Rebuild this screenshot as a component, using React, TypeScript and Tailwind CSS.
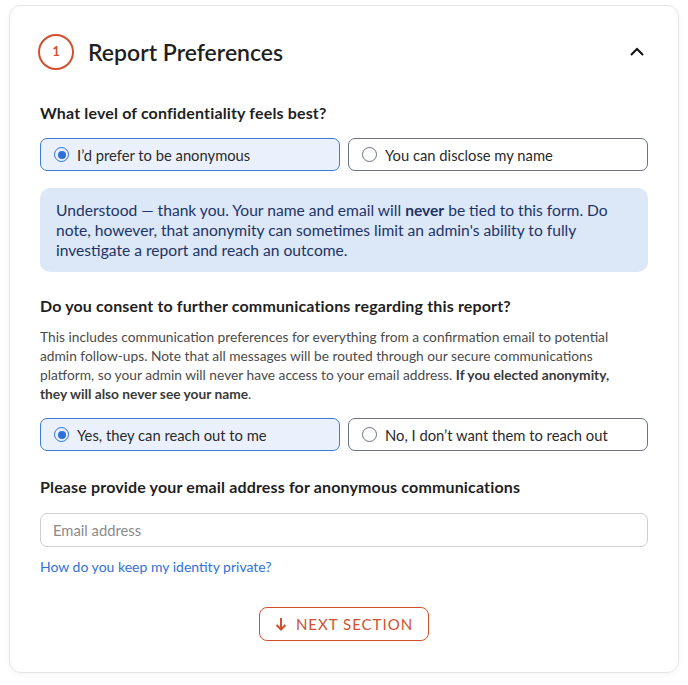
import React from "react";

function Radio({ checked, label }: { checked: boolean; label: string }) {
  return (
    <div
      className={
        "flex h-[33px] flex-1 items-center gap-[8px] rounded-[7px] border px-[13px] " +
        (checked ? "border-[#3b7ddd] bg-[#eaf1fc]" : "border-[#6b7280] bg-white")
      }
    >
      {checked ? (
        <span className="flex h-[15px] w-[15px] items-center justify-center rounded-full border-[1.5px] border-[#2f6fdc]">
          <span className="h-[8px] w-[8px] rounded-full bg-[#2f6fdc]" />
        </span>
      ) : (
        <span className="h-[15px] w-[15px] rounded-full border-[1.5px] border-[#6b7280]" />
      )}
      <span className="text-[14.75px] leading-[20px] text-[#2a2a2a]">{label}</span>
    </div>
  );
}

export default function App() {
  return (
    <div
      className="min-h-[685px] bg-white px-[9px] pt-[5px]"
      style={{ fontFamily: "Lato, 'Noto Sans', sans-serif" }}
    >
      <div className="rounded-[12px] border border-[#e6e6e6] bg-white px-[30px] pb-[31px] pt-[28px] shadow-[0_2px_6px_rgba(0,0,0,0.04)]">
        <div className="-ml-[2px] flex items-center justify-between">
          <div className="flex items-center gap-[14px]">
            <div className="flex h-[36px] w-[36px] items-center justify-center rounded-full border-2 border-[#d2502e] text-[12.5px] font-bold text-[#d2502e]">
              1
            </div>
            <h1 className="text-[23px] font-semibold leading-[30px] text-[#1f1f1f]">Report Preferences</h1>
          </div>
          <svg width="16" height="16" viewBox="0 0 16 16" className="mr-[3px]">
            <path d="M2 11 L8 5 L14 11" fill="none" stroke="#111" strokeWidth="2" />
          </svg>
        </div>

        <h2 className="mt-[32px] text-[16px] font-bold leading-[22px] tracking-[0.15px] text-[#1f1f1f]">
          What level of confidentiality feels best?
        </h2>
        <div className="mt-[14px] flex gap-[8px]">
          <Radio checked label="I’d prefer to be anonymous" />
          <Radio checked={false} label="You can disclose my name" />
        </div>

        <div className="mt-[17px] rounded-[10px] bg-[#dce7f8] px-[16px] py-[12px] text-[15.6px] leading-[20px] text-[#1d3566]">
          Understood — thank you. Your name and email will <b className="font-bold">never</b> be
          tied to this form. Do note, however, that anonymity can sometimes limit an admin's
          ability to fully investigate a report and reach an outcome.
        </div>

        <h2 className="mt-[23px] text-[16px] font-bold leading-[22px] tracking-[0.15px] text-[#1f1f1f]">
          Do you consent to further communications regarding this report?
        </h2>
        <p className="mt-[10px] pr-[12px] text-[13.75px] leading-[19px] text-[#4b4b4b]">
          This includes communication preferences for everything from a confirmation email to
          potential admin follow-ups. Note that all messages will be routed through our secure
          communications platform, so your admin will never have access to your email address.{" "}
          <b className="font-bold text-[#3a3a3a]">If you elected anonymity, they will also never see your name</b>.
        </p>
        <div className="mt-[15px] flex gap-[8px]">
          <Radio checked label="Yes, they can reach out to me" />
          <Radio checked={false} label="No, I don’t want them to reach out" />
        </div>

        <h2 className="mt-[25px] text-[16px] font-bold leading-[22px] tracking-[0.15px] text-[#1f1f1f]">
          Please provide your email address for anonymous communications
        </h2>
        <div className="mt-[15px] flex h-[34px] items-center rounded-[7px] border border-[#cfcfcf] px-[12px] text-[14.75px] text-[#8a8a8a]">
          Email address
        </div>
        <a className="mt-[10px] block text-[14px] leading-[20px] text-[#2f72d8]">How do you keep my identity private?</a>

        <div className="mt-[30px] flex justify-center">
          <button className="flex h-[34px] w-[170px] items-center justify-center gap-[9px] rounded-[8px] border border-[#d2502e] text-[15px] tracking-[1px] text-[#d2502e]">
            <svg width="12" height="14" viewBox="0 0 12 14">
              <path d="M6 1 V12.5 M1.5 8 L6 12.5 L10.5 8" fill="none" stroke="#d2502e" strokeWidth="2" />
            </svg>
            NEXT SECTION
          </button>
        </div>
      </div>
    </div>
  );
}
